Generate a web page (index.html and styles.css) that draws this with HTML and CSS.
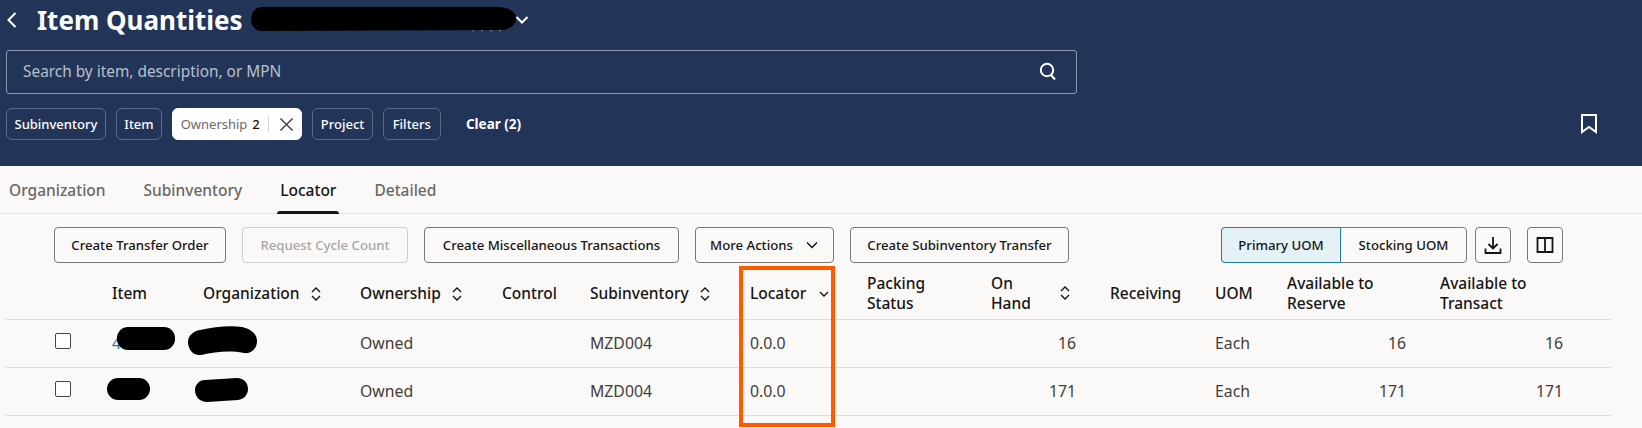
FILE: index.html
```html
<!DOCTYPE html>
<html lang="en">
<head>
<meta charset="utf-8">
<title>Item Quantities</title>
<link rel="stylesheet" href="styles.css">
</head>
<body>
<div class="page">
  <header class="hero">
    <div class="title-row">
      <svg class="back" viewBox="0 0 12 18"><path d="M9.5 2 2.5 9l7 7"/></svg>
      <h1 class="title">Item Quantities</h1>
      <svg class="title-caret" viewBox="0 0 14 10"><path d="M1.5 2 7 7.5 12.5 2"/></svg>
    </div>
    <div class="search">
      <span class="search-text">Search by item, description, or MPN</span>
      <svg class="search-icon" viewBox="0 0 20 20"><circle cx="9" cy="9" r="6.2"/><path d="m13 14 4 4.5"/></svg>
    </div>
    <div class="chips">
      <span class="chip">Subinventory</span>
      <span class="chip">Item</span>
      <span class="chip chip-on"><span class="chip-label">Ownership</span><b class="chip-count">2</b><i class="chip-sep"></i><svg class="chip-x" viewBox="0 0 16 16"><path d="m1.500 1.500 13 13M14.500 1.500l-13 13"/></svg></span>
      <span class="chip">Project</span>
      <span class="chip chip-wide">Filters</span>
      <span class="clear">Clear (2)</span>
      <svg class="bookmark" viewBox="0 0 16 20"><path d="M1 1h14v17l-7-5-7 5z"/></svg>
    </div>
  </header>

  <nav class="tabs">
    <span class="tab">Organization</span>
    <span class="tab">Subinventory</span>
    <span class="tab tab-on">Locator</span>
    <span class="tab">Detailed</span>
  </nav>

  <div class="toolbar">
    <button class="btn w-transfer">Create Transfer Order</button>
    <button class="btn btn-off w-request">Request Cycle Count</button>
    <button class="btn w-misc">Create Miscellaneous Transactions</button>
    <button class="btn w-more">More Actions<svg class="btn-caret" viewBox="0 0 14 10"><path d="M2 2.500 7 7.500l5-5"/></svg></button>
    <button class="btn w-sub">Create Subinventory Transfer</button>
    <div class="toolbar-end">
      <div class="segment">
        <span class="seg seg-on">Primary UOM</span>
        <span class="seg">Stocking UOM</span>
      </div>
      <button class="btn-icon"><svg viewBox="0 0 20 20"><path d="M10 2v11M5.500 9 10 13.500 14.500 9M2.500 13.500V18h15v-4.500"/></svg></button>
      <button class="btn-icon"><svg viewBox="0 0 20 20"><path d="M2.500 3h15v14h-15zM10 3v14"/></svg></button>
    </div>
  </div>

  <div class="grid head">
    <span></span>
    <span class="th">Item</span>
    <span class="th">Organization<svg class="sort" viewBox="0 0 12 16"><path d="M2 6l4-4 4 4M2 10l4 4 4-4"/></svg></span>
    <span class="th">Ownership<svg class="sort" viewBox="0 0 12 16"><path d="M2 6l4-4 4 4M2 10l4 4 4-4"/></svg></span>
    <span class="th">Control</span>
    <span class="th">Subinventory<svg class="sort" viewBox="0 0 12 16"><path d="M2 6l4-4 4 4M2 10l4 4 4-4"/></svg></span>
    <span class="th">Locator<svg class="sort-down" viewBox="0 0 12 8"><path d="M2 2l4 4 4-4"/></svg></span>
    <span class="th">Packing<br>Status</span>
    <span class="th">On<br>Hand<svg class="sort sort-far" viewBox="0 0 12 16"><path d="M2 6l4-4 4 4M2 10l4 4 4-4"/></svg></span>
    <span class="th">Receiving</span>
    <span class="th">UOM</span>
    <span class="th">Available to<br>Reserve</span>
    <span class="th">Available to<br>Transact</span>
  </div>
  <div class="grid row">
    <span class="check"><i class="box"></i></span>
    <a class="link">4</a>
    <span></span>
    <span>Owned</span>
    <span></span>
    <span>MZD004</span>
    <span>0.0.0</span>
    <span></span>
    <span class="num n1">16</span>
    <span></span>
    <span>Each</span>
    <span class="num n2">16</span>
    <span class="num n3">16</span>
  </div>
  <div class="grid row">
    <span class="check"><i class="box"></i></span>
    <span></span>
    <span></span>
    <span>Owned</span>
    <span></span>
    <span>MZD004</span>
    <span>0.0.0</span>
    <span></span>
    <span class="num n1">171</span>
    <span></span>
    <span>Each</span>
    <span class="num n2">171</span>
    <span class="num n3">171</span>
  </div>

  <svg class="overlay" viewBox="0 0 1642 428">
    <path class="speck" d="M472 30.500h31"/>
    <path class="ink" d="M262 7h235c12 0 19 5 19 12s-7 10-14 11l-240 1c-7 0-11-5-11-12s5-12 11-12z"/>
    <rect class="ink" x="117" y="327" width="58" height="23" rx="11"/>
    <path class="ink" d="M200 330c14-3 30-5 42-3 10 2 15 8 15 14 0 8-6 13-13 12-16-3-28-1-43 2-8 1-13-6-13-13 0-6 5-11 12-12z"/>
    <rect class="ink" x="107" y="378" width="43" height="22" rx="11"/>
    <path class="ink" d="M205 380l32-2c7 0 11 5 11 11s-4 10-10 11l-31 2c-7 0-12-5-12-12 0-5 4-10 10-10z"/>
    <rect class="mark" x="741" y="268" width="92" height="157"/>
  </svg>
</div>
</body>
</html>
```
FILE: styles.css
```css
* { box-sizing: border-box; }
html, body { margin: 0; height: 100%; }
body { background: #fff; font-family: "Noto Sans", sans-serif; color: #161513; overflow: hidden; }
.page { position: relative; width: 1642px; height: 428px; background: #faf9f8; }

.hero { height: 166px; background: #223558; padding: 0 45px 0 6px; color: #fff; }
.title-row { display: flex; align-items: center; height: 50px; padding-bottom: 10px; }
.back { width: 12px; height: 18px; fill: none; stroke: #fff; stroke-width: 2; }
.title { margin: 0 0 0 19px; font-size: 26px; font-weight: 700; line-height: 40px; width: 478px; white-space: nowrap; }
.title-caret { width: 14px; height: 10px; fill: none; stroke: #fff; stroke-width: 2; }

.search { display: flex; align-items: center; justify-content: space-between; width: 1071px; height: 44px; padding: 0 18px 2px 16px; border: 1px solid #8e97aa; border-radius: 3px; }
.search-text { font-size: 15.400px; color: #b9c0cc; }
.search-icon { width: 20px; height: 20px; fill: none; stroke: #fff; stroke-width: 2; }

.chips { display: flex; align-items: center; gap: 10px; margin-top: 14px; height: 32px; }
.chip { display: flex; align-items: center; height: 32px; padding: 0 7.500px; border: 1px solid #5d6a85; border-radius: 6px; font-size: 13px; font-weight: 500; white-space: nowrap; }
.chip-wide { padding: 0 9px; }
.chip-on { background: #fff; border-color: #fff; color: #161513; }
.chip-label { color: #6b6865; font-weight: 400; }
.chip-count { margin-left: 5px; font-weight: 500; }
.chip-sep { width: 1px; height: 16px; margin: 0 10px 0 8px; background: #d5d3cf; }
.chip-x { width: 15px; height: 15px; fill: none; stroke: #47443f; stroke-width: 1.600; }
.clear { margin-left: 15px; font-size: 13.500px; font-weight: 700; }
.bookmark { width: 16px; height: 20px; margin-left: auto; fill: none; stroke: #fff; stroke-width: 2; }

.tabs { display: flex; gap: 38px; height: 48px; padding: 7px 0 0 9px; border-bottom: 1px solid #e4e2df; }
.tab { position: relative; font-size: 15.500px; font-weight: 500; color: #6b6865; line-height: 34px; }
.tab-on { color: #161513; }
.tab-on::after { content: ""; position: absolute; left: -3px; right: -3px; bottom: -1px; height: 3px; background: #161513; border-radius: 3px 3px 0 0; }

.toolbar { display: flex; align-items: center; gap: 16px; height: 36px; margin: 13px 0 0 54px; padding-right: 79px; }
.btn { display: flex; flex: none; align-items: center; justify-content: center; height: 36px; padding: 0; background: transparent; border: 1px solid #7b7874; border-radius: 4px; font: 500 13.200px "Noto Sans", sans-serif; color: #161513; white-space: nowrap; }
.w-transfer { width: 172px; }
.w-request { width: 166px; }
.w-misc { width: 255px; }
.w-more { width: 139px; }
.w-sub { width: 219px; }
.btn-off { color: #a9a7a3; border-color: #d2d0cc; }
.btn-caret { width: 14px; height: 10px; margin-left: 12px; fill: none; stroke: #161513; stroke-width: 1.500; }
.toolbar-end { display: flex; align-items: center; margin-left: auto; }
.segment { display: flex; height: 36px; margin-right: 8px; border: 1px solid #7b7874; border-radius: 4px; font-size: 13.200px; font-weight: 500; }
.seg { display: flex; align-items: center; justify-content: center; width: 125px; }
.seg-on { width: 120px; margin: -1px 0 -1px -1px; background: #e4f1f7; border: 1px solid #227e9e; border-radius: 4px 0 0 4px; }
.btn-icon { display: flex; align-items: center; justify-content: center; width: 36px; height: 36px; padding: 0; background: transparent; border: 1px solid #7b7874; border-radius: 4px; }
.btn-icon + .btn-icon { margin-left: 16px; }
.btn-icon svg { width: 20px; height: 20px; fill: none; stroke: #161513; stroke-width: 1.800; }

.grid { display: grid; grid-template-columns: 106px 91px 157px 142px 88px 160px 117px 124px 119px 105px 72px 153px 171px; width: 1605px; margin-left: 6px; align-items: center; border-bottom: 1px solid #dfddda; }
.head { height: 57px; padding-top: 3px; font-size: 15.500px; font-weight: 500; line-height: 20px; }
.th { position: relative; display: block; }
.row { height: 48px; padding-bottom: 2px; font-size: 15.800px; color: #3f3d3a; }
.sort { width: 12px; height: 16px; margin-left: 10px; vertical-align: -3px; fill: none; stroke: #161513; stroke-width: 1.400; }
.sort-far { position: absolute; left: 68px; top: 12px; margin: 0; }
.sort-down { width: 12px; height: 8px; margin-left: 12px; vertical-align: 1px; fill: none; stroke: #161513; stroke-width: 1.400; }
.check { padding-left: 49px; line-height: 0; }
.box { display: inline-block; width: 16px; height: 16px; margin-top: -3px; border: 1px solid #47443f; border-radius: 2px; background: #fff; }
.link { color: #227e9e; }
.num { text-align: right; }
.n1 { padding-right: 34px; }
.n2 { padding-right: 34px; }
.n3 { padding-right: 48px; }

.overlay { position: absolute; left: 0; top: 0; width: 1642px; height: 428px; pointer-events: none; }
.ink { fill: #000; }
.speck { fill: none; stroke: #6f7b92; stroke-width: 1.500; stroke-dasharray: 2 7; }
.mark { fill: none; stroke: #ff5a00; stroke-width: 4; }
```
